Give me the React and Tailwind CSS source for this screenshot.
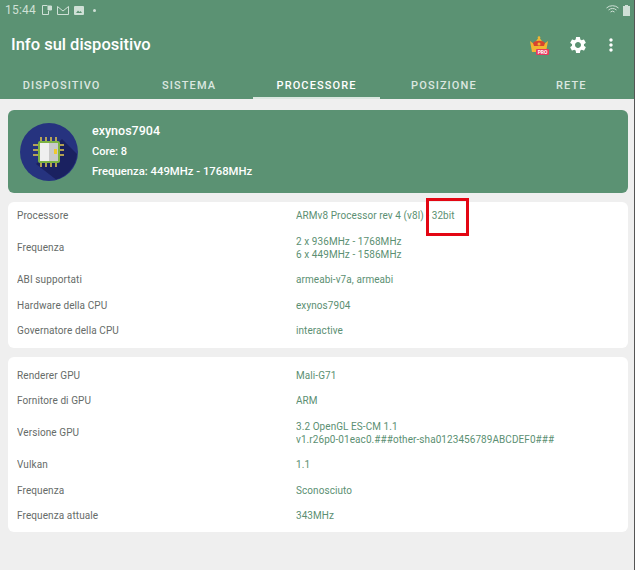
import { MdMoreVert, MdSettings } from "react-icons/md"

const font = { fontFamily: "Roboto, sans-serif" }

const cpuRows = [
  ["Processore", ["ARMv8 Processor rev 4 (v8l) - 32bit"]],
  ["Frequenza", ["2 x 936MHz - 1768MHz", "6 x 449MHz - 1586MHz"]],
  ["ABI supportati", ["armeabi-v7a, armeabi"]],
  ["Hardware della CPU", ["exynos7904"]],
  ["Governatore della CPU", ["interactive"]],
]

const gpuRows = [
  ["Renderer GPU", ["Mali-G71"]],
  ["Fornitore di GPU", ["ARM"]],
  ["Versione GPU", ["3.2 OpenGL ES-CM 1.1", "v1.r26p0-01eac0.###other-sha0123456789ABCDEF0###"]],
  ["Vulkan", ["1.1"]],
  ["Frequenza", ["Sconosciuto"]],
  ["Frequenza attuale", ["343MHz"]],
]

const tabs = [
  ["DISPOSITIVO", false],
  ["SISTEMA", false],
  ["PROCESSORE", true],
  ["POSIZIONE", false],
  ["RETE", false],
]

function Row({ label, values }) {
  return (
    <div className="flex items-center py-[6.250px]">
      <div className="w-[288px] pl-[9px] text-[11px] leading-[13px] text-[#666b68] tracking-[0.1px]">
        <div className="origin-left scale-x-[0.91]">{label}</div>
      </div>
      <div className="text-[11px] leading-[13px] text-[#5b8f72] tracking-[0.1px]">
        {values.map((v) => (
          <div key={v} className="origin-left scale-x-[0.905]">{v}</div>
        ))}
      </div>
    </div>
  )
}

function Card({ rows, className }) {
  return (
    <div className={"bg-white rounded-[6px] " + className}>
      {rows.map(([label, values]) => (
        <Row key={label} label={label} values={values} />
      ))}
    </div>
  )
}

function StatusBar() {
  return (
    <div className="h-[20px] flex items-center justify-between pl-[5px] pr-[7px] text-[#cfe0d6]">
      <div className="flex items-center">
        <span className="text-[12px] leading-none tracking-[0.2px] w-[37px]">15:44</span>
        <svg width="10" height="10" viewBox="0 0 10 10" fill="none" stroke="currentColor">
          <path d="M5.500 .500H.500v9h6V6" />
          <path d="M6 1h3.500v4H6z" fill="currentColor" />
        </svg>
        <svg width="12" height="9" viewBox="0 0 12 9" fill="none" stroke="currentColor" className="ml-[5px]">
          <path d="M.500 8.500v-8L6 5l5.500-4.500v8z" />
        </svg>
        <svg width="10" height="9" viewBox="0 0 10 9" className="ml-[5px]">
          <rect width="10" height="9" rx="1" fill="currentColor" />
          <path d="M2 7l2-2.500 1.500 1.500 1-1L8 7z" fill="#5b9273" />
        </svg>
        <span className="ml-[9px] w-[3px] h-[3px] rounded-full bg-[#cfe0d6]"></span>
      </div>
      <div className="flex items-center gap-[4px]">
        <svg width="13" height="10" viewBox="0 0 13 10" fill="none" stroke="currentColor" strokeWidth="1">
          <path d="M0.500 3a9 9 0 0 1 12 0M2.500 5a6 6 0 0 1 8 0M4.500 7a3 3 0 0 1 4 0" />
        </svg>
        <svg width="7" height="11" viewBox="0 0 7 11">
          <path d="M2 0h3v1h2v10H0V1h2z" fill="currentColor" />
        </svg>
      </div>
    </div>
  )
}

function CrownIcon() {
  return (
    <div className="relative w-[19px] h-[19px]">
      <svg width="18" height="16" viewBox="0 0 18 16">
        <path d="M0 5l4 3 5-7 5 7 4-3-2 11H2z" fill="#f2b632" />
        <path d="M3 7c2-3 10-3 12 0l-1 3H4z" fill="#d8442f" />
        <circle cx="9" cy="1.500" r="1.300" fill="#f2b632" />
        <circle cx="9" cy="8" r="1.500" fill="#f2b632" />
      </svg>
      <span className="absolute right-0 bottom-0 bg-[#e8385e] text-white text-[5px] leading-[6px] font-bold px-[1.500px] rounded-[1px]">PRO</span>
    </div>
  )
}

function ChipLogo() {
  return (
    <svg width="58" height="58" viewBox="0 0 58 58" className="shrink-0">
      <circle cx="29" cy="29" r="29" fill="#26337f" />
      <path d="M16 41L42 16l15 15a29 29 0 0 1-21 25.500z" fill="#1a2160" />
      <g stroke="#e3c94c" strokeWidth="1.500">
        <path d="M21 14v6M26 14v6M31 14v6M36 14v6M21 38v6M26 38v6M31 38v6M36 38v6" />
        <path d="M13 22h6M13 27h6M13 32h6M38 22h6M38 27h6M38 32h6" />
      </g>
      <rect x="18" y="18" width="22" height="22" rx="2" fill="#7cb342" />
      <rect x="20" y="20" width="18" height="18" fill="#c9c9c9" />
      <rect x="20" y="20" width="9" height="18" fill="#efefef" />
      <rect x="34" y="26" width="3" height="5" fill="#f0c92c" />
    </svg>
  )
}

export default function App() {
  return (
    <div className="relative w-[637px] h-[570px] bg-[#efefef] overflow-hidden flex flex-col" style={font}>
      <div className="bg-[#5b9273] h-[99px] shrink-0 flex flex-col">
        <StatusBar />
        <div className="h-[50px] flex items-center justify-between pl-[11px] pr-[16px]">
          <span className="text-[16.500px] font-medium text-white">Info sul dispositivo</span>
          <div className="flex items-center">
            <CrownIcon />
            <MdSettings size={20} color="white" className="ml-[19px]" />
            <MdMoreVert size={20} color="white" className="ml-[13px]" />
          </div>
        </div>
        <div className="flex flex-1 w-[637px] -ml-[2px]">
          {tabs.map(([name, active]) => (
            <div
              key={name}
              className={
                "flex-1 flex items-center justify-center pt-[6px] text-[11px] font-medium tracking-[1.100px] border-b-2 " +
                (active ? "text-white border-[#dbe7e0]" : "text-[#dbe7e0] border-transparent")
              }
            >
              {name}
            </div>
          ))}
        </div>
      </div>
      <div className="pl-[8px] pr-[9px] pt-[11px] flex flex-col">
        <div className="bg-[#5b9273] rounded-[6px] h-[83px] flex items-center pl-[12px] gap-[14px] text-white">
          <ChipLogo />
          <div className="flex flex-col gap-[6px] -mt-[1px]">
            <div className="text-[12.500px] font-medium leading-[16px]">exynos7904</div>
            <div className="text-[11px] font-medium leading-[14px]">Core: 8</div>
            <div className="text-[11.300px] font-medium leading-[14px]">Frequenza: 449MHz - 1768MHz</div>
          </div>
        </div>
        <Card rows={cpuRows} className="mt-[9px] pt-[1.200px] pb-[4.300px]" />
        <Card rows={gpuRows} className="mt-[9px] pt-[5.500px] pb-[3.500px]" />
      </div>
      <div className="absolute left-[426px] top-[198px] w-[43px] h-[38px] border-[3px] border-[#e30613]"></div>
      <div className="absolute right-0 top-0 bottom-0 w-[3px] bg-white border-l border-[#555555]"></div>
    </div>
  )
}
